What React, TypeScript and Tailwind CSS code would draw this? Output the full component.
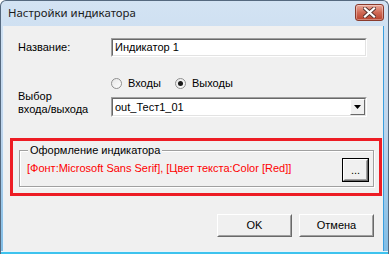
import React from "react";

function Radio({ checked }: { checked?: boolean }) {
  return (
    <div className="w-[11px] h-[11px] rounded-full border border-[#8f8f8f] bg-gradient-to-br from-[#e6e6e6] to-[#ffffff] flex items-center justify-center">
      {checked && <div className="w-[5px] h-[5px] rounded-full bg-[#1a1a1a]" />}
    </div>
  );
}

function Sunken({ className, children }: { className?: string; children?: React.ReactNode }) {
  return (
    <div className={"border border-t-[#a0a0a0] border-l-[#a0a0a0] border-b-[#ffffff] border-r-[#ffffff] " + (className || "")}>
      <div className="w-full h-full border border-t-[#696969] border-l-[#696969] border-b-[#e3e3e3] border-r-[#e3e3e3] bg-white flex items-center">
        {children}
      </div>
    </div>
  );
}

function Btn({ label, className }: { label: string; className?: string }) {
  return (
    <div className={"border border-t-[#ffffff] border-l-[#ffffff] border-b-[#696969] border-r-[#696969] bg-[#f0f0f0] " + (className || "")}>
      <div className="w-full h-full border border-t-[#f0f0f0] border-l-[#f0f0f0] border-b-[#a0a0a0] border-r-[#a0a0a0] flex items-center justify-center text-black">
        {label}
      </div>
    </div>
  );
}

export default function App() {
  return (
    <div className="w-[389px] h-[254px] flex flex-col rounded-t-[6px] border border-b-0 border-[#55697f] bg-gradient-to-b from-[#d3e3f3] via-[#bfd5ec] to-[#7fbde6] overflow-hidden font-['Liberation_Sans',Arial,sans-serif] text-[11px] text-black">
      {/* title bar */}
      <div className="h-[25px] flex justify-between items-start pl-[7px] pr-[4px]">
        <div className="mt-[4px] text-[11.4px] leading-[16px] text-[#1b1b1b] font-['Noto_Sans',sans-serif]">Настройки индикатора</div>
        <div className="mt-[3px] w-[29px] h-[17px] rounded-[3px] border border-[#8a3a2c] bg-gradient-to-b from-[#e9a99b] via-[#d06a56] to-[#b8412c] flex items-center justify-center shadow-[inset_0_0_0_1px_rgba(255,255,255,0.35)]">
          <svg width="13" height="11" viewBox="0 0 13 11">
            <path d="M2 1.5 L11 9.5 M11 1.5 L2 9.5" stroke="#5a3530" strokeWidth="4" strokeLinecap="square" />
            <path d="M2 1.5 L11 9.5 M11 1.5 L2 9.5" stroke="#ffffff" strokeWidth="2.2" strokeLinecap="square" />
          </svg>
        </div>
      </div>
      {/* middle */}
      <div className="flex h-[225px]">
        <div className="w-[2px]" />
        <div className="w-[380px] h-[225px] bg-[#f0f0f0] flex flex-col pl-[6px] pt-[12px] border-l border-[#eaf2fa]">
          {/* row 1 */}
          <div className="flex items-center h-[19px] pl-[8px]">
            <span className="w-[93px]">Название:</span>
            <Sunken className="w-[256px] h-[19px]">
              <span className="pl-[2px]">Индикатор 1</span>
            </Sunken>
          </div>
          {/* radios */}
          <div className="flex items-center h-[13px] mt-[20px] pl-[101px]">
            <Radio />
            <span className="ml-[6px] w-[47px]">Входы</span>
            <Radio checked />
            <span className="ml-[6px]">Выходы</span>
          </div>
          {/* row 3 */}
          <div className="flex pl-[8px]">
            <div className="w-[93px] leading-[13px]">
              <div>Выбор</div>
              <div>входа/выхода</div>
            </div>
            <Sunken className="w-[256px] h-[20px] mt-[7px]">
              <span className="pl-[2px] flex-1">out_Тест1_01</span>
              <div className="w-[15px] h-full border border-t-[#ffffff] border-l-[#ffffff] border-b-[#696969] border-r-[#696969] bg-[#f0f0f0] flex items-center justify-center">
                <svg width="7" height="4" viewBox="0 0 7 4">
                  <path d="M0 0 H7 L3.5 4 Z" fill="#000" />
                </svg>
              </div>
            </Sunken>
          </div>
          {/* red box */}
          <div className="mt-[21px] w-[372px] h-[58px] border-[3px] border-[#ed1c24] pl-[6px] pt-[9px]">
            <div className="relative w-[355px] h-[37px] border border-[#a0a0a0] shadow-[inset_1px_1px_0_#ffffff,1px_1px_0_#ffffff] flex justify-between pl-[7px] pr-[4px]">
              <span className="absolute left-[8px] top-[-8px] px-[2px] bg-[#f0f0f0] leading-[14px]">Оформление индикатора</span>
              <span className="mt-[10px] text-[#ff0000] leading-[14px]">[Фонт:Microsoft Sans Serif], [Цвет текста:Color [Red]]</span>
              <div className="mt-[7px] w-[27px] h-[24px] border border-black">
                <Btn label="..." className="w-full h-full" />
              </div>
            </div>
          </div>
          {/* buttons */}
          <div className="mt-[18px] flex justify-end gap-[7px] pr-[9px]">
            <Btn label="OK" className="w-[75px] h-[23px]" />
            <Btn label="Отмена" className="w-[75px] h-[23px]" />
          </div>
        </div>
        <div className="w-[1px] bg-[#3a9fe0]" />
        <div className="w-[4px]" />
      </div>
      <div className="h-[3px] bg-[#3ec3ee] border-t border-[#e8f4fb]" />
    </div>
  );
}
